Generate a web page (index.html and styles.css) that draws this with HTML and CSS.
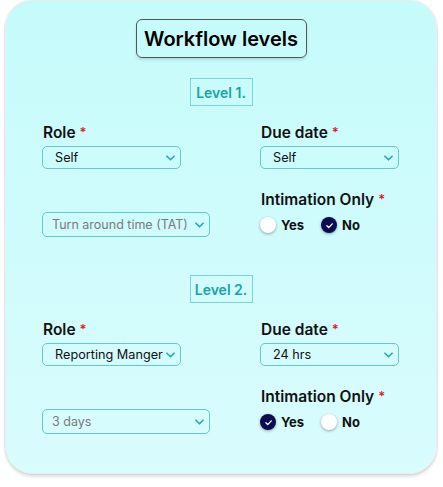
FILE: index.html
```html
<!DOCTYPE html>
<html>
<head>
<meta charset="utf-8">
<link rel="stylesheet" href="styles.css">
</head>
<body>
<div class="card">
  <div class="center"><div class="title">Workflow levels</div></div>

  <section class="level">
    <div class="center"><div class="badge">Level 1.</div></div>
    <div class="grid">
      <div class="col">
        <div class="label">Role <span class="req">*</span></div>
        <div class="select narrow"><span class="val">Self</span><svg class="chev" viewBox="0 0 10 6"><path d="M1 1l4 4 4-4" /></svg></div>
        <div class="select wide"><span class="val ph">Turn around time (TAT)</span><svg class="chev" viewBox="0 0 10 6"><path d="M1 1l4 4 4-4" /></svg></div>
      </div>
      <div class="col">
        <div class="label">Due date <span class="req">*</span></div>
        <div class="select narrow"><span class="val">Self</span><svg class="chev" viewBox="0 0 10 6"><path d="M1 1l4 4 4-4" /></svg></div>
        <div class="label second-label">Intimation Only <span class="req">*</span></div>
        <div class="radios">
          <span class="radio"><span class="dot"></span>Yes</span>
          <span class="radio"><span class="dot on"><svg viewBox="0 0 10 10"><path d="M2.6 5.2l1.7 1.7 3.2-3.4" /></svg></span>No</span>
        </div>
      </div>
    </div>
  </section>

  <section class="level">
    <div class="center"><div class="badge">Level 2.</div></div>
    <div class="grid">
      <div class="col">
        <div class="label">Role <span class="req">*</span></div>
        <div class="select narrow"><span class="val">Reporting Manger</span><svg class="chev" viewBox="0 0 10 6"><path d="M1 1l4 4 4-4" /></svg></div>
        <div class="select wide"><span class="val ph">3 days</span><svg class="chev" viewBox="0 0 10 6"><path d="M1 1l4 4 4-4" /></svg></div>
      </div>
      <div class="col">
        <div class="label">Due date <span class="req">*</span></div>
        <div class="select narrow"><span class="val">24 hrs</span><svg class="chev" viewBox="0 0 10 6"><path d="M1 1l4 4 4-4" /></svg></div>
        <div class="label second-label">Intimation Only <span class="req">*</span></div>
        <div class="radios">
          <span class="radio"><span class="dot on"><svg viewBox="0 0 10 10"><path d="M2.6 5.2l1.7 1.7 3.2-3.4" /></svg></span>Yes</span>
          <span class="radio"><span class="dot"></span>No</span>
        </div>
      </div>
    </div>
  </section>
</div>
</body>
</html>
```

FILE: styles.css
```css
* { box-sizing: border-box; }
html, body { margin: 0; padding: 0; background: #ffffff; }
body {
  font-family: "Inter", "Noto Sans", sans-serif;
  color: #111;
  width: 443px;
  height: 487px;
  overflow: hidden;
}
.card {
  margin: 0 6px 0 5px;
  height: 474px;
  border-radius: 28px;
  background: linear-gradient(180deg, #c6fbfb 0%, #d9fcfd 100%);
  border: 1px solid #e6eeee;
  box-shadow: 0 3px 3px rgba(0,0,0,0.12), 0 0 0 1px rgba(0,0,0,0.05);
  padding: 18px 0 0 36px;
}
.center { display: flex; justify-content: center; padding-right: 36px; }
.title {
  width: 171px;
  height: 39px;
  border: 1px solid #555;
  border-radius: 6px;
  display: flex;
  align-items: center;
  justify-content: center;
  font-weight: 600;
  font-size: 20px;
  color: #000;
  box-shadow: 0 2px 3px rgba(0,0,0,0.12);
}
.level { margin-top: 20px; }
.level + .level { margin-top: 38px; }
.badge {
  width: 63px;
  height: 28px;
  border: 1px solid #7ad6d6;
  display: flex;
  align-items: center;
  justify-content: center;
  font-size: 14px;
  font-weight: 600;
  color: #1aa3a3;
}
.grid {
  display: grid;
  grid-template-columns: 218px 1fr;
  margin-top: 16px;
}
.col { display: flex; flex-direction: column; align-items: flex-start; }
.label {
  font-size: 15.5px;
  font-weight: 600;
  height: 20px;
  line-height: 20px;
  color: #111;
  padding-left: 1px;
  white-space: nowrap;
}
.second-label { margin-top: 20px; }
.req { color: #e8161b; font-size: 13px; vertical-align: 1px; }
.select {
  margin-top: 4px;
  height: 23px;
  border: 1px solid #63c9c9;
  border-radius: 5px;
  display: flex;
  align-items: center;
  justify-content: space-between;
  padding: 0 5px 0 12px;
  font-size: 12.7px;
  color: #111;
  white-space: nowrap;
}
.select.narrow { width: 139px; }
.select.wide { width: 168px; height: 25px; padding-left: 9px; margin-top: 43px; font-size: 12.5px; }
.val.ph { color: #7a7a7a; }
.chev { width: 9px; height: 6px; flex: none; }
.chev path { fill: none; stroke: #27a9a9; stroke-width: 1.8; stroke-linecap: round; stroke-linejoin: round; }
.radios { display: flex; margin-top: 8px; height: 16px; align-items: center; }
.radio {
  display: inline-flex;
  align-items: center;
  font-size: 13px;
  font-weight: 700;
  width: 61px;
}
.dot {
  width: 16px;
  height: 16px;
  border-radius: 50%;
  background: #fff;
  box-shadow: 0 1px 3px rgba(0,0,0,0.35);
  margin-right: 5px;
  display: inline-flex;
  align-items: center;
  justify-content: center;
  flex: none;
}
.dot.on { background: #0c0c52; }
.dot svg { width: 11px; height: 11px; }
.dot svg path { fill: none; stroke: #fff; stroke-width: 1.2; stroke-linecap: round; stroke-linejoin: round; }
```
